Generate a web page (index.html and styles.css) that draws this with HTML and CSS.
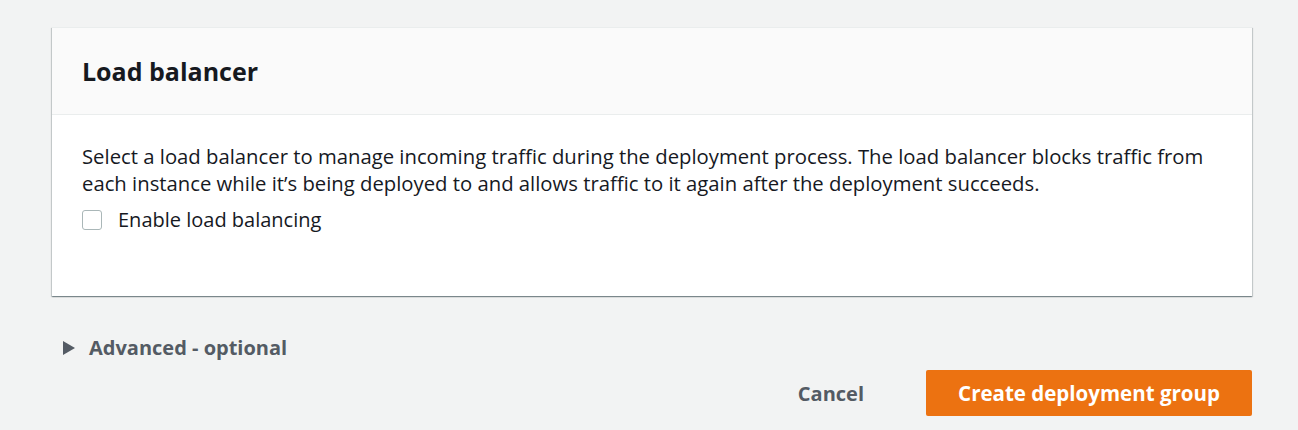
FILE: index.html
```html
<!DOCTYPE html>
<html>
<head>
<meta charset="utf-8">
<link rel="stylesheet" href="styles.css">
</head>
<body>
<div class="page">
  <section class="card">
    <header class="card-header"><h2>Load balancer</h2></header>
    <div class="card-body">
      <p class="desc">Select a load balancer to manage incoming traffic during the deployment process. The load balancer blocks traffic from each instance while it’s being deployed to and allows traffic to it again after the deployment succeeds.</p>
      <label class="check"><span class="box"></span><span>Enable load balancing</span></label>
    </div>
  </section>
  <div class="advanced">
    <svg class="caret" width="12" height="14" viewBox="0 0 12 14"><path d="M0 0 L12 7 L0 14 Z" fill="#545b64"/></svg>
    <span>Advanced - optional</span>
  </div>
  <div class="actions">
    <button class="btn-link">Cancel</button>
    <button class="btn-primary">Create deployment group</button>
  </div>
</div>
</body>
</html>
```
FILE: styles.css
```css
* { box-sizing: border-box; }
body {
  margin: 0;
  background: #f2f3f3;
  font-family: "Open Sans", "Noto Sans", sans-serif;
  color: #16191f;
}
.page {
  width: 1200px;
  margin-left: 52px;
  padding-top: 27px;
}
.card {
  background: #fff;
  box-shadow: 0 1px 1px 0 rgba(0,28,36,.3), 1px 1px 1px 0 rgba(0,28,36,.15), -1px 1px 1px 0 rgba(0,28,36,.15);
  border-top: 1px solid #eaeded;
}
.card-header {
  background: #fafafa;
  border-bottom: 1px solid #eaeded;
  height: 87px;
  padding: 0 30px;
  display: flex;
  align-items: center;
}
.card-header h2 {
  margin: 0;
  font-size: 25px;
  font-weight: 700;
  color: #16191f;
}
.card-body {
  padding: 28px 30px 0 30px;
  height: 181px;
}
.desc {
  margin: 0;
  font-size: 20.3px;
  line-height: 27px;
  color: #16191f;
}
.check {
  display: flex;
  align-items: center;
  gap: 16px;
  margin-top: 9px;
  font-size: 20px;
  line-height: 27px;
}
.box {
  width: 20px;
  height: 20px;
  border: 1px solid #aab7b8;
  border-radius: 3px;
  background: #fff;
}
.advanced {
  display: flex;
  align-items: center;
  gap: 14px;
  margin-top: 38px;
  padding-left: 11px;
  font-size: 20px;
  line-height: 27px;
  font-weight: 700;
  color: #545b64;
}
.actions {
  display: flex;
  justify-content: flex-end;
  align-items: center;
  gap: 62px;
  margin-top: 9px;
}
.btn-link {
  background: none;
  border: none;
  font: inherit;
  font-size: 20px;
  font-weight: 700;
  color: #545b64;
  padding: 0;
}
.btn-primary {
  background: #ec7211;
  border: none;
  border-radius: 2px;
  color: #fff;
  font: inherit;
  font-size: 20.5px;
  font-weight: 700;
  width: 326px;
  height: 46px;
}
```
